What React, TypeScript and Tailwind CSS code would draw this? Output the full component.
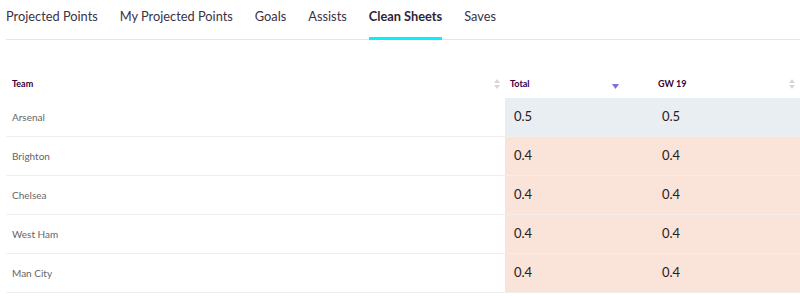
const tabs = [
  "Projected Points",
  "My Projected Points",
  "Goals",
  "Assists",
  "Clean Sheets",
  "Saves",
];

const rows = [
  { team: "Arsenal", total: "0.5", gw: "0.5", top: true },
  { team: "Brighton", total: "0.4", gw: "0.4" },
  { team: "Chelsea", total: "0.4", gw: "0.4" },
  { team: "West Ham", total: "0.4", gw: "0.4" },
  { team: "Man City", total: "0.4", gw: "0.4" },
];

function SortIcon() {
  return (
    <svg width="6" height="10" viewBox="0 0 6 10" className="shrink-0">
      <path d="M3 0 L6 4 H0 Z" fill="#d6d6d6" />
      <path d="M3 10 L6 6 H0 Z" fill="#d6d6d6" />
    </svg>
  );
}

function SortDown() {
  return (
    <svg width="7" height="5" viewBox="0 0 7 5" className="shrink-0 mt-[5px]">
      <path d="M0 0 H7 L3.5 5 Z" fill="#7a6ee0" />
    </svg>
  );
}

export default function App() {
  return (
    <div className="w-[800px] h-[296px] overflow-hidden bg-white font-['Lato',sans-serif]">
      <nav className="ml-[6px] h-[40px] flex gap-[22px] border-b border-[#e6e6e6]">
        {tabs.map((tab) => (
          <div
            key={tab}
            className={
              tab === "Clean Sheets"
                ? "pt-[7px] text-[12.8px] font-bold text-[#2e2538] border-b-[3px] border-[#05f0ff] -mb-px"
                : "pt-[7px] text-[12.8px] text-[#3a3245]"
            }
          >
            {tab}
          </div>
        ))}
      </nav>

      <div className="ml-[6px] mt-[30px]">
        <div className="flex h-[28px] items-center text-[9px] font-bold text-[#37003c]">
          <div className="w-[499px] flex items-center justify-between pl-[6px] pr-[5px]">
            <span>Team</span>
            <SortIcon />
          </div>
          <div className="w-[147px] flex items-center justify-between pl-[5px] pr-[33px]">
            <span>Total</span>
            <SortDown />
          </div>
          <div className="w-[148px] flex items-center justify-between pl-[6px] pr-[5px]">
            <span>GW 19</span>
            <SortIcon />
          </div>
        </div>

        {rows.map((row) => (
          <div key={row.team} className="flex h-[39px] border-b border-[#efefef]">
            <div className="w-[499px] flex items-center pl-[6px] text-[10px] text-[#666]">
              {row.team}
            </div>
            <div
              className={
                row.top
                  ? "w-[295px] flex items-center bg-[#e9eef2] text-[13px] text-[#222]"
                  : "w-[295px] flex items-center bg-[#fae3d9] text-[13px] text-[#222]"
              }
            >
              <span className="w-[147px] pl-[9px]">{row.total}</span>
              <span className="pl-[10px]">{row.gw}</span>
            </div>
          </div>
        ))}
      </div>
    </div>
  );
}
